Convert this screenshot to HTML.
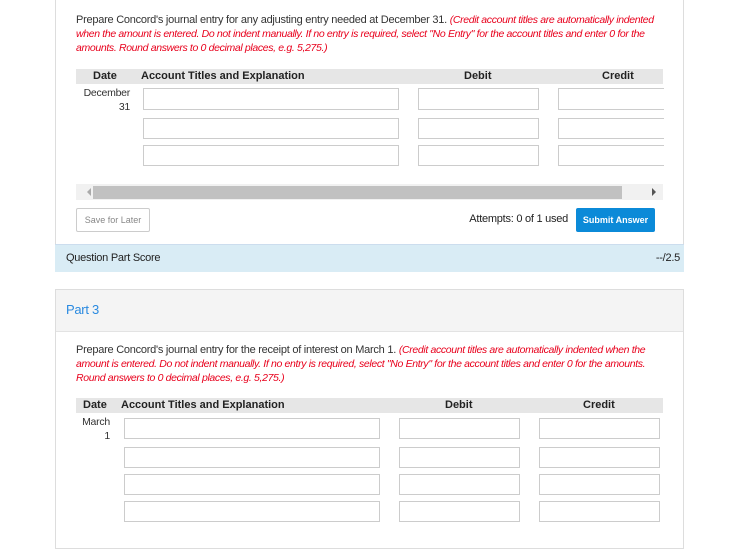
<!DOCTYPE html><html><head><style>
body{margin:0;width:741px;height:536px;background:#fff;font-family:"Liberation Sans",sans-serif;position:relative;overflow:hidden;color:#333}
.a{position:absolute}
.t{font-size:11px;line-height:14px;letter-spacing:-0.25px;color:#333;white-space:nowrap}
.r{color:#e8001c;font-style:italic;letter-spacing:-0.35px;font-size:10.5px}
.h{background:#e6e6e6;font-weight:bold;font-size:11px;color:#222}
.i{position:absolute;border:1px solid #ccc;height:19px;background:#fff;box-sizing:border-box}
</style></head><body>
<div class="a" style="left:55px;top:0;width:629px;height:272px;border:1px solid #ddd;border-top:none;box-sizing:border-box"></div>
<div class="a t" style="left:76px;top:13px">Prepare Concord's journal entry for any adjusting entry needed at December 31. <span class="r">(Credit account titles are automatically indented</span><br><span class="r">when the amount is entered. Do not indent manually. If no entry is required, select "No Entry" for the account titles and enter 0 for the</span><br><span class="r">amounts. Round answers to 0 decimal places, e.g. 5,275.)</span></div>
<div class="a h" style="left:76px;top:69px;width:587px;height:15px"></div>
<div class="a h" style="left:93px;top:70px;background:none">Date</div>
<div class="a h" style="left:141px;top:70px;background:none">Account Titles and Explanation</div>
<div class="a h" style="left:464px;top:70px;background:none">Debit</div>
<div class="a h" style="left:602px;top:70px;background:none">Credit</div>
<div class="a t" style="left:76px;top:86px;width:54px;text-align:right;font-size:10.5px">December<br>31</div>
<div class="i" style="left:143px;top:88px;width:256px;height:22px"></div><div class="i" style="left:418px;top:88px;width:121px;height:22px"></div><div class="i" style="left:558px;top:88px;width:106px;height:22px;border-right:none"></div>
<div class="i" style="left:143px;top:118px;width:256px;height:21px"></div><div class="i" style="left:418px;top:118px;width:121px;height:21px"></div><div class="i" style="left:558px;top:118px;width:106px;height:21px;border-right:none"></div>
<div class="i" style="left:143px;top:145px;width:256px;height:21px"></div><div class="i" style="left:418px;top:145px;width:121px;height:21px"></div><div class="i" style="left:558px;top:145px;width:106px;height:21px;border-right:none"></div>
<div class="a" style="left:76px;top:184px;width:587px;height:16px;background:#f1f1f1"></div>
<div class="a" style="left:87px;top:188px;width:0;height:0;border:4px solid transparent;border-right:4px solid #aaa;border-left:none"></div>
<div class="a" style="left:93px;top:186px;width:529px;height:13px;background:#c1c1c1"></div>
<div class="a" style="left:652px;top:188px;width:0;height:0;border:4px solid transparent;border-left:4px solid #555;border-right:none"></div>
<div class="a" style="left:76px;top:208px;width:74px;height:24px;border:1px solid #ccc;border-radius:2px;box-sizing:border-box;font-size:9px;color:#888;text-align:center;line-height:22px">Save for Later</div>
<div class="a t" style="left:440px;top:212px;width:128px;text-align:right;font-size:11px;color:#222">Attempts: 0 of 1 used</div>
<div class="a" style="left:576px;top:208px;width:79px;height:24px;background:#0b8ad8;border-radius:2px;color:#fff;font-size:9px;text-align:center;line-height:24px;font-weight:bold">Submit Answer</div>
<div class="a" style="left:55px;top:244px;width:629px;height:28px;background:#d9ecf5;border-top:1px solid #cde;box-sizing:border-box"></div>
<div class="a t" style="left:66px;top:251px;font-size:11px;color:#222">Question Part Score</div>
<div class="a t" style="left:630px;top:251px;width:50px;text-align:right;font-size:11px;color:#222">--/2.5</div>
<div class="a" style="left:55px;top:289px;width:629px;height:260px;border:1px solid #ddd;box-sizing:border-box"></div>
<div class="a" style="left:56px;top:290px;width:627px;height:41px;background:#f4f4f4;border-bottom:1px solid #e3e3e3"></div>
<div class="a" style="left:66px;top:302px;font-size:13px;color:#2a8ae0;letter-spacing:-0.3px">Part 3</div>
<div class="a t" style="left:76px;top:343px">Prepare Concord's journal entry for the receipt of interest on March 1. <span class="r">(Credit account titles are automatically indented when the</span><br><span class="r">amount is entered. Do not indent manually. If no entry is required, select "No Entry" for the account titles and enter 0 for the amounts.</span><br><span class="r">Round answers to 0 decimal places, e.g. 5,275.)</span></div>
<div class="a h" style="left:76px;top:398px;width:587px;height:15px"></div>
<div class="a h" style="left:83px;top:399px;background:none">Date</div>
<div class="a h" style="left:121px;top:399px;background:none">Account Titles and Explanation</div>
<div class="a h" style="left:445px;top:399px;background:none">Debit</div>
<div class="a h" style="left:583px;top:399px;background:none">Credit</div>
<div class="a t" style="left:60px;top:415px;width:50px;text-align:right;font-size:10.5px">March<br>1</div>
<div class="i" style="left:124px;top:418px;width:256px;height:21px"></div><div class="i" style="left:399px;top:418px;width:121px;height:21px"></div><div class="i" style="left:539px;top:418px;width:121px;height:21px"></div>
<div class="i" style="left:124px;top:447px;width:256px;height:21px"></div><div class="i" style="left:399px;top:447px;width:121px;height:21px"></div><div class="i" style="left:539px;top:447px;width:121px;height:21px"></div>
<div class="i" style="left:124px;top:474px;width:256px;height:21px"></div><div class="i" style="left:399px;top:474px;width:121px;height:21px"></div><div class="i" style="left:539px;top:474px;width:121px;height:21px"></div>
<div class="i" style="left:124px;top:501px;width:256px;height:21px"></div><div class="i" style="left:399px;top:501px;width:121px;height:21px"></div><div class="i" style="left:539px;top:501px;width:121px;height:21px"></div>
</body></html>
